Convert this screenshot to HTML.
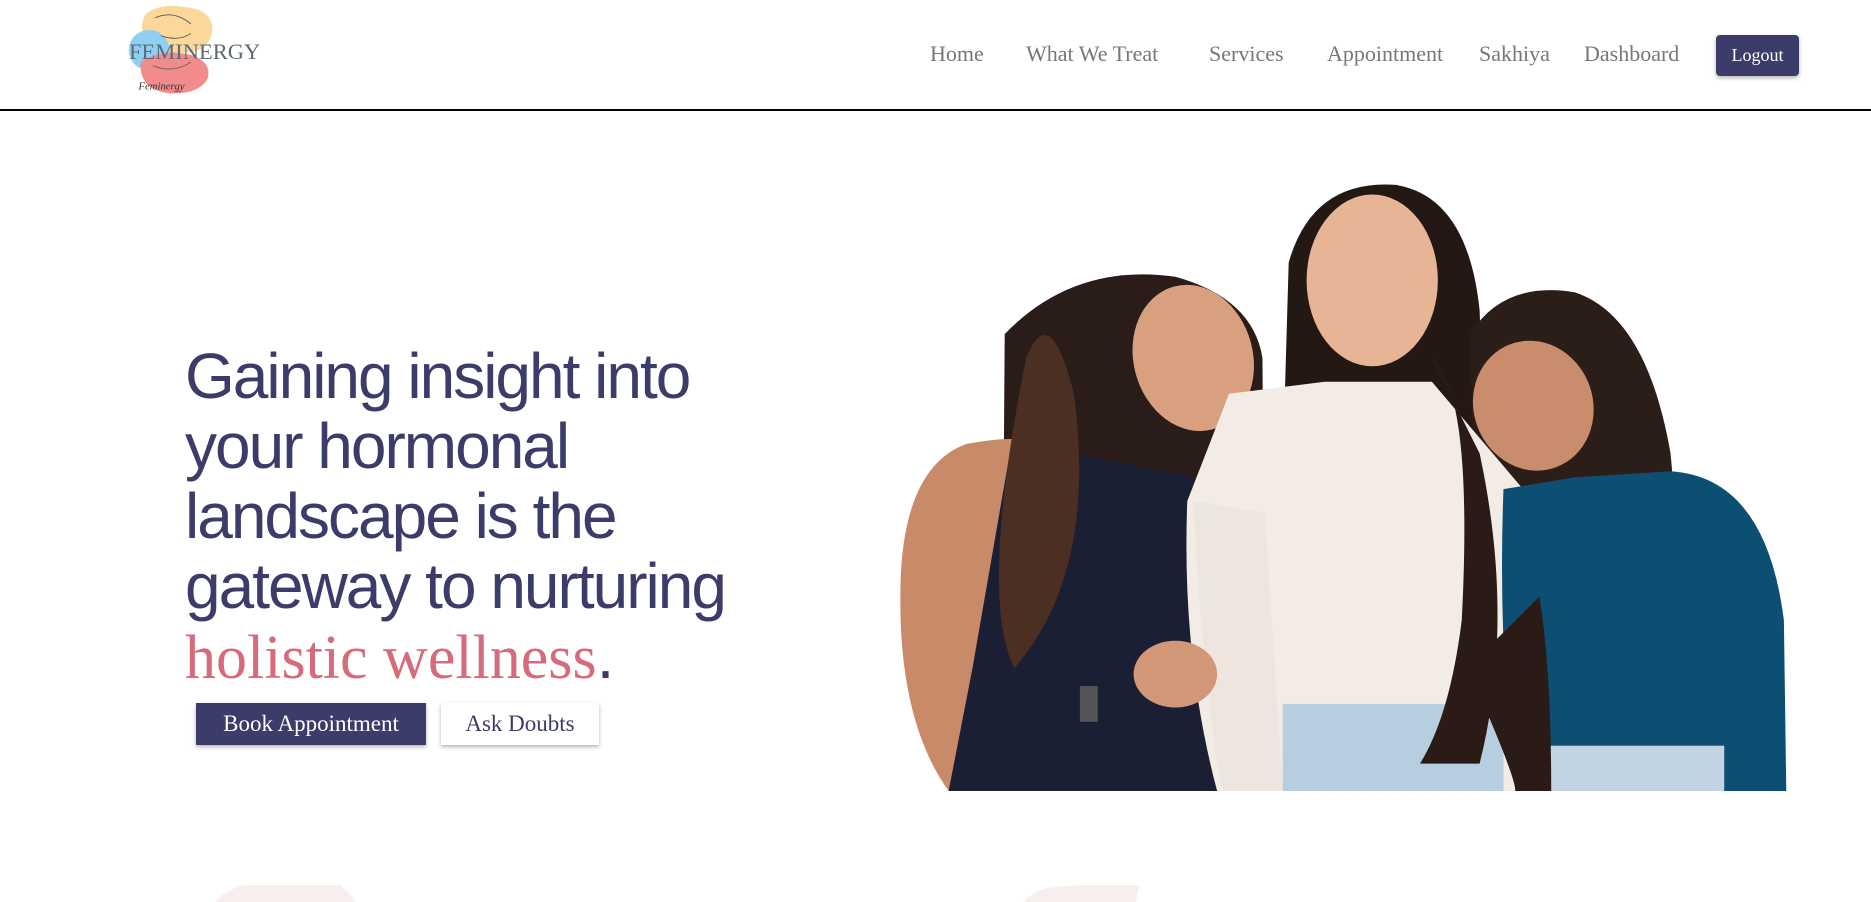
<!DOCTYPE html>
<html><head><meta charset="utf-8"><style>
*{margin:0;padding:0;box-sizing:border-box}
body{width:1871px;height:902px;overflow:hidden;background:#fff;position:relative;font-family:"Liberation Serif",serif}
.nav a{position:absolute;top:41px;font-size:22px;color:#777;text-decoration:none;white-space:nowrap}
.line{position:absolute;left:0;top:109px;width:1871px;height:2px;background:#000}
.logout{position:absolute;left:1716px;top:35px;width:83px;height:41px;background:#3c3c6a;border-radius:4px;color:#fff;font-size:18px;text-align:center;line-height:41px;box-shadow:0 2px 4px rgba(0,0,0,.3)}
h1{position:absolute;left:185px;top:341px;font-family:"Liberation Sans",sans-serif;font-weight:400;font-size:64px;line-height:70px;letter-spacing:-2px;color:#3c3c6a;white-space:nowrap}
h1 .p{font-family:"Liberation Serif",serif;color:#d56b7b;font-size:62px;letter-spacing:0}
.btn{position:absolute;top:703px;height:42px;font-size:23px;line-height:42px;text-align:center;box-shadow:0 2px 4px rgba(0,0,0,.3)}
</style></head><body>
<svg style="position:absolute;left:0;top:0" width="1871" height="902" viewBox="0 0 1568 756" preserveAspectRatio="none">
<!-- logo -->
<path d="M122 12 Q135 2 155 6 Q178 8 178 25 Q176 42 158 44 Q135 46 124 36 Q115 24 122 12Z" fill="#fbd89a"/>
<circle cx="125" cy="42" r="17" fill="#8fd0f2"/>
<path d="M118 52 Q135 40 160 46 Q178 52 174 66 Q166 80 140 78 Q116 74 118 52Z" fill="#f28c8c"/>
<path d="M130 15 Q145 8 160 20 M135 30 Q150 35 160 28 M128 55 Q145 62 160 52" stroke="#555" stroke-width=".7" fill="none"/>
<text x="116" y="75" font-family="Liberation Serif" font-style="italic" font-size="9" fill="#333">Feminergy</text>
<!-- photo -->
<path d="M842 280 Q900 220 985 232 Q1050 250 1058 300 L1060 560 L840 560Z" fill="#2a1c18"/>
<path d="M1080 220 Q1100 150 1170 155 Q1230 165 1240 260 L1250 560 L1070 560Z" fill="#241815"/>
<path d="M1232 280 Q1260 235 1320 245 Q1380 265 1400 380 L1420 600 L1240 600Z" fill="#2b1d18"/>
<path d="M810 372 Q850 365 860 370 L880 663 L795 663 Q750 600 755 480 Q760 390 810 372Z" fill="#c98a6a"/>
<path d="M848 370 L1000 400 L1030 663 L795 663 L815 560Z" fill="#1b1f33"/>
<path d="M860 300 Q880 250 900 330 Q920 480 850 560 Q820 500 860 300Z" fill="#4a2f22"/>
<ellipse cx="1000" cy="300" rx="50" ry="62" fill="#d9a07f" transform="rotate(-15 1000 300)"/>
<path d="M1030 330 L1110 320 L1200 320 L1285 420 L1285 663 L1020 663 Q990 550 995 420Z" fill="#f3ebe6"/>
<rect x="1075" y="590" width="185" height="73" fill="#b7cde0"/>
<path d="M1000 420 Q1010 600 1025 663 L1075 663 L1060 430Z" fill="#efe5df"/>
<ellipse cx="1150" cy="235" rx="55" ry="72" fill="#e8b496"/>
<path d="M1260 410 L1320 400 L1400 395 Q1480 400 1495 520 L1497 663 L1270 663 Q1255 540 1260 410Z" fill="#0d4f73"/>
<rect x="1275" y="625" width="170" height="38" fill="#c2d4e3"/>
<ellipse cx="1285" cy="340" rx="50" ry="55" fill="#c98c6d" transform="rotate(-20 1285 340)"/>
<path d="M1200 300 Q1235 330 1225 520 Q1215 600 1190 640 L1240 640 Q1270 520 1240 380Z" fill="#2a1b16"/>
<path d="M1230 560 Q1270 650 1270 663 L1300 663 Q1300 560 1290 500Z" fill="#2a1b16"/>
<ellipse cx="985" cy="565" rx="35" ry="28" fill="#d29679"/>
<rect x="905" y="575" width="15" height="30" fill="#555"/>
<!-- bottom blobs -->
<path d="M180 756 Q190 745 205 742 L285 742 Q293 748 298 756Z" fill="#f7efed"/>
<path d="M858 756 Q865 748 875 745 Q890 742 910 742 L955 742 L952 756Z" fill="#f7efed"/>
</svg>
<div style="position:absolute;left:129px;top:39px;font-size:22.5px;color:#5e6a7a">FEMINERGY</div>
<div class="nav">
<a style="left:930px">Home</a>
<a style="left:1026px">What We Treat</a>
<a style="left:1209px">Services</a>
<a style="left:1327px">Appointment</a>
<a style="left:1479px">Sakhiya</a>
<a style="left:1584px">Dashboard</a>
</div>
<div class="logout">Logout</div>
<div class="line"></div>
<h1>Gaining insight into<br>your hormonal<br>landscape is the<br>gateway to nurturing<br><span class="p">holistic wellness</span>.</h1>
<div class="btn" style="left:196px;width:230px;background:#3c3c6a;color:#fff">Book Appointment</div>
<div class="btn" style="left:441px;width:158px;background:#fff;color:#3c3c6a">Ask Doubts</div>
</body></html>
